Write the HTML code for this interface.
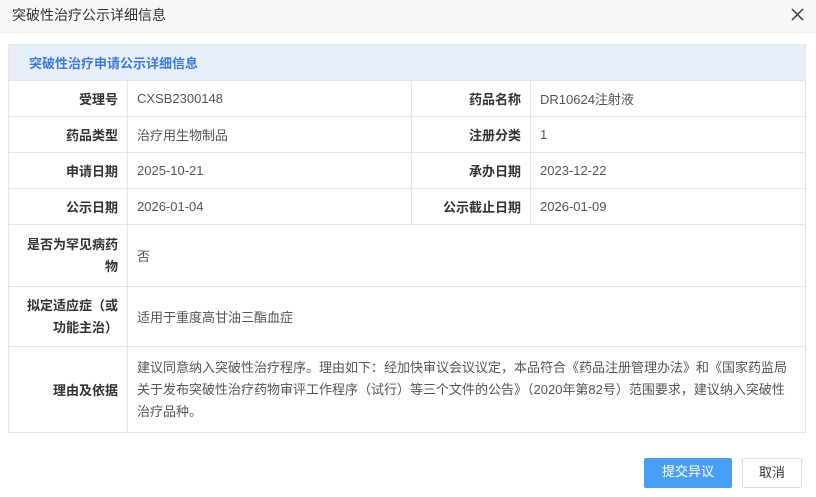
<!DOCTYPE html>
<html><head><meta charset="utf-8"><style>
*{margin:0;padding:0;box-sizing:border-box}
body{width:816px;height:497px;background:#fff;font-family:"Liberation Sans","Noto Sans CJK SC",sans-serif;font-size:13px;color:#333;position:relative;overflow:hidden}
.hd{position:absolute;left:0;top:0;width:816px;height:33px;background:#f8f8f8;border-bottom:1px solid #eee;font-size:14px;line-height:30px;padding-left:12px;color:#333}
.x{position:absolute;right:12px;top:8px}
table{position:absolute;left:8px;top:44px;width:798px;border-collapse:collapse}
td{border:1px solid #e6e6e6;padding:0 9px;color:#555}
td.l{text-align:right;font-weight:bold;color:#333;width:119px}
td.l2{width:116px}
.sec{background:#e8eef8;color:#3a7bd5;font-weight:bold;height:36px;padding-left:20px;text-align:left}
.btn{position:absolute;top:458px;height:30px;line-height:28px;text-align:center;font-size:13px;border-radius:2px}
</style></head><body>
<div class="hd">突破性治疗公示详细信息<svg class="x" width="13" height="13" viewBox="0 0 14 14"><path d="M1 1L13 13M13 1L1 13" stroke="#444" stroke-width="1.6"/></svg></div>
<table>
<tr><td colspan="4" class="sec">突破性治疗申请公示详细信息</td></tr>
<tr style="height:36px"><td class="l">受理号</td><td style="width:284px">CXSB2300148</td><td class="l l2">药品名称</td><td>DR10624注射液</td></tr>
<tr style="height:36px"><td class="l">药品类型</td><td>治疗用生物制品</td><td class="l">注册分类</td><td>1</td></tr>
<tr style="height:36px"><td class="l">申请日期</td><td>2025-10-21</td><td class="l">承办日期</td><td>2023-12-22</td></tr>
<tr style="height:36px"><td class="l">公示日期</td><td>2026-01-04</td><td class="l">公示截止日期</td><td>2026-01-09</td></tr>
<tr style="height:62px"><td class="l" style="line-height:22px">是否为罕见病药<br>物</td><td colspan="3">否</td></tr>
<tr style="height:60px"><td class="l" style="line-height:22px">拟定适应症（或<br>功能主治）</td><td colspan="3">适用于重度高甘油三酯血症</td></tr>
<tr style="height:86px"><td class="l">理由及依据</td><td colspan="3" style="line-height:22px">建议同意纳入突破性治疗程序。理由如下：经加快审议会议议定，本品符合《药品注册管理办法》和《国家药监局关于发布突破性治疗药物审评工作程序（试行）等三个文件的公告》（2020年第82号）范围要求，建议纳入突破性治疗品种。</td></tr>
</table>
<div class="btn" style="left:644px;width:88px;background:#4a9ff5;color:#fff">提交异议</div>
<div class="btn" style="left:742px;width:60px;border:1px solid #ddd;color:#333">取消</div>
</body></html>
